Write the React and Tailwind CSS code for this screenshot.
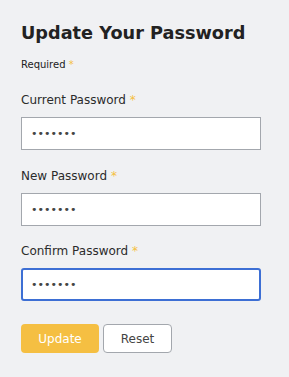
import React, { useState } from "react";

const Field = ({ label, value, onChange, focused }) => (
  <div className="flex flex-col">
    <label className="text-[12px] leading-[16px] text-[#2b2b2b]">
      {label} <span className="text-[#f5bf42]">*</span>
    </label>
    <input
      type="password"
      value={value}
      autoFocus={focused}
      onChange={(e) => onChange(e.target.value)}
      className={
        focused
          ? "mt-[9px] h-[33px] w-[240px] bg-white border-2 border-[#3d6fd4] rounded-[3px] px-[8px] text-[11px] text-[#444] outline-none"
          : "mt-[9px] h-[33px] w-[240px] bg-white border border-[#a3a7ad] px-[9px] text-[11px] text-[#444] outline-none"
      }
    />
  </div>
);

export default function App() {
  const [current, setCurrent] = useState("1234567");
  const [next, setNext] = useState("1234567");
  const [confirm, setConfirm] = useState("1234567");

  return (
    <div
      className="w-[289px] h-[377px] bg-[#f0f1f3] px-[21px] pt-[22px]"
      style={{ fontFamily: '"DejaVu Sans", Verdana, sans-serif' }}
    >
      <h1 className="text-[17.7px] leading-[22px] font-bold text-[#222]">Update Your Password</h1>
      <p className="mt-[14px] text-[10px] leading-[14px] text-[#222]">
        Required <span className="text-[#f5bf42]">*</span>
      </p>
      <div className="mt-[20px] flex flex-col gap-[17.5px]">
        <Field label="Current Password" value={current} onChange={setCurrent} />
        <Field label="New Password" value={next} onChange={setNext} />
        <Field label="Confirm Password" value={confirm} onChange={setConfirm} focused />
      </div>
      <div className="mt-[23px] flex gap-[4px]">
        <button className="h-[29px] w-[78px] rounded-[4px] bg-[#f5bf42] text-white text-[12px]">Update</button>
        <button className="h-[29px] w-[69px] rounded-[4px] bg-white border border-[#a3a7ad] text-[#444] text-[12px]">Reset</button>
      </div>
    </div>
  );
}
